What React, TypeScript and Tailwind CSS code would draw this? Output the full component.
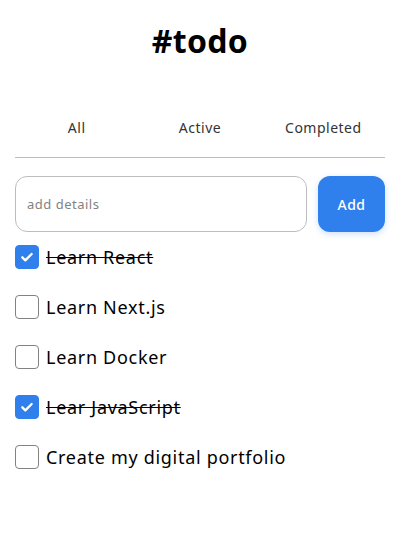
import { useState } from "react";

type Todo = {
  id: number;
  text: string;
  done: boolean;
};

const initialTodos: Todo[] = [
  { id: 1, text: "Learn React", done: true },
  { id: 2, text: "Learn Next.js", done: false },
  { id: 3, text: "Learn Docker", done: false },
  { id: 4, text: "Lear JavaScript", done: true },
  { id: 5, text: "Create my digital portfolio", done: false },
];

const tabs = ["All", "Active", "Completed"];

const App = () => {
  const [todos, setTodos] = useState<Todo[]>(initialTodos);
  const [text, setText] = useState("");

  const toggle = (id: number) => {
    setTodos((prev) =>
      prev.map((t) => (t.id === id ? { ...t, done: !t.done } : t))
    );
  };

  return (
    <div
      className="w-full min-h-[544px] bg-white pl-[15px] pr-[17px] text-[#333]"
      style={{ fontFamily: '"Noto Sans", "Open Sans", sans-serif' }}
    >
      <h1 className="pt-[21px] text-center text-[32px] leading-[40px] font-bold text-black tracking-[0.3px]">
        #todo
      </h1>

      <div className="mt-[52px] grid grid-cols-3 border-b border-[#bdbdbd] pt-[6px] pb-[20px]">
        {tabs.map((tab) => (
          <button
            key={tab}
            className="text-center text-[14px] leading-[18px] tracking-[0.5px] text-[#333]"
          >
            {tab}
          </button>
        ))}
      </div>

      <div className="mt-[18px] flex gap-[11px]">
        <input
          value={text}
          onChange={(e) => setText(e.target.value)}
          placeholder="add details"
          className="h-[56px] flex-1 rounded-[12px] border border-[#bdbdbd] px-[11px] text-[13px] tracking-[0.5px] outline-none placeholder:text-[#828282]"
        />
        <button className="h-[56px] w-[67px] rounded-[12px] bg-[#2f80ed] text-[14px] font-medium tracking-[0.5px] text-white shadow-[0_2px_6px_rgba(127,177,243,0.4)]">
          Add
        </button>
      </div>

      <ul className="mt-[13px] flex flex-col gap-[26px]">
        {todos.map((todo) => (
          <li key={todo.id} className="flex items-center gap-[7px]">
            <button
              onClick={() => toggle(todo.id)}
              className={`flex h-[24px] w-[24px] shrink-0 items-center justify-center rounded-[4px] border ${
                todo.done
                  ? "border-[#2f80ed] bg-[#2f80ed]"
                  : "border-[#828282] bg-white"
              }`}
            >
              {todo.done ? (
                <svg width="16" height="16" viewBox="0 0 24 24">
                  <path
                    d="M5 12.5l4.5 4.5L19 7.5"
                    fill="none"
                    stroke="white"
                    strokeWidth="3.5"
                    strokeLinecap="round"
                    strokeLinejoin="round"
                  />
                </svg>
              ) : null}
            </button>
            <span
              className={`text-[18px] leading-[24px] tracking-[0.7px] text-black ${
                todo.done ? "line-through" : ""
              }`}
            >
              {todo.text}
            </span>
          </li>
        ))}
      </ul>
    </div>
  );
};

export default App;
